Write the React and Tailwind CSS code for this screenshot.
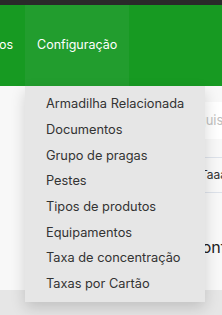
import React from 'react';

const items = [
  'Armadilha Relacionada',
  'Documentos',
  'Grupo de pragas',
  'Pestes',
  'Tipos de produtos',
  'Equipamentos',
  'Taxa de concentração',
  'Taxas por Cartão',
];

export default function App() {
  return (
    <div
      className="relative w-[222px] h-[315px] overflow-hidden bg-[#f8f8f8]"
      style={{ fontFamily: 'Inter, "Noto Sans", sans-serif' }}
    >
      <div className="h-[5px] bg-[#2a2a2a]" />
      {/* barra de navegação */}
      <nav className="flex h-[81px] bg-[#179a22] text-white text-[12.5px]">
        <div className="flex w-[25px] shrink-0 items-center justify-end overflow-hidden pr-[12px]">
          <span className="whitespace-nowrap">Produtos</span>
        </div>
        <div className="relative flex items-center px-[12px] bg-[#229d2e]">
          <span className="whitespace-nowrap">Configuração</span>
        </div>
      </nav>

      {/* conteúdo por trás */}
      <div className="pl-[166px] pr-0">
        <div className="mt-[16px] h-[37px] bg-white flex items-center pl-[9px] text-[13px] text-[#c0c0c0] whitespace-nowrap">
          Pesquisar
        </div>
        <div className="mt-[18px] border-t border-b border-[#dde2ea] h-[36px] flex items-center pl-[34px] text-[12px] text-[#333] whitespace-nowrap">
          Taaaaaa
        </div>
        <div className="mt-[42px] pl-[24px] text-[16px] text-[#222] whitespace-nowrap">Configuração</div>
      </div>
      <div className="absolute left-0 right-0 bottom-0 h-[25px] bg-[#e6e6e6]" />

      {/* menu suspenso */}
      <div className="absolute left-[25px] top-[86px] w-[180px] bg-[#e6e6e6] pt-[5px] pb-[5px] shadow-[0_6px_14px_rgba(0,0,0,0.16)]">
        {items.map((label) => (
          <div
            key={label}
            className="h-[25.7px] flex items-center pl-[21px] text-[12.8px] text-[#333] whitespace-nowrap"
          >
            {label}
          </div>
        ))}
      </div>
    </div>
  );
}
